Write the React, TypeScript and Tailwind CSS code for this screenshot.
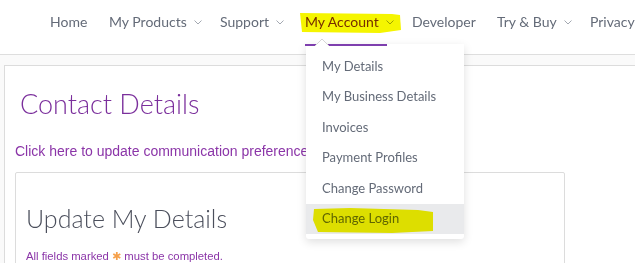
const Chevron = () => (
  <svg width="8" height="5" viewBox="0 0 8 5" className="ml-[7px] mt-[1px]">
    <path d="M0.5 0.5 L4 4 L7.5 0.5" fill="none" stroke="#a3a8b1" strokeWidth="1" />
  </svg>
);

const navItems = [
  { label: 'Home', w: 'w-[59px]', menu: false },
  { label: 'My Products', w: 'w-[111px]', menu: true },
  { label: 'Support', w: 'w-[85px]', menu: true },
  { label: 'My Account', w: 'w-[107px]', menu: true, active: true },
  { label: 'Developer', w: 'w-[85px]', menu: false },
  { label: 'Try & Buy', w: 'w-[93px]', menu: true },
  { label: 'Privacy', w: 'w-[60px]', menu: false },
];

const accountMenu = [
  'My Details',
  'My Business Details',
  'Invoices',
  'Payment Profiles',
  'Change Password',
  'Change Login',
];

export default function App() {
  return (
    <div className="relative w-[635px] h-[263px] overflow-hidden bg-white font-['Lato',sans-serif]">
      {/* top nav */}
      <header className="h-[55px] border-b border-[#dedede] pl-[50px] pt-[11px]">
        <nav className="flex items-center whitespace-nowrap text-[14px] text-[#646b78]">
          {navItems.map((item) => (
            <div
              key={item.label}
              className={`${item.w} shrink-0 flex items-center ${item.active ? 'text-[#7b2f9c]' : ''}`}
            >
              {item.label}
              {item.menu && <Chevron />}
            </div>
          ))}
        </nav>
      </header>

      {/* page body */}
      <div className="bg-[#fafafa] pt-[10px] pl-[4px] h-[208px]">
        <div className="bg-white border-l border-t border-[#dcdcdc] h-full pl-[10px] pr-[70px]">
          <h1 className="pl-[5px] pt-[22px] text-[27px] font-light leading-[32px] text-[#7b2f9c]">
            Contact Details
          </h1>
          <a className="block mt-[23px] font-['Liberation_Sans',sans-serif] text-[14px] leading-[16px] text-[#8b35a8] whitespace-nowrap">
            Click here to update communication preferences
          </a>
          <div className="mt-[13px] border border-[#dcdcdc] rounded-[2px] h-[120px] px-[10px] pt-[30px]">
            <h2 className="text-[25px] font-light leading-[30px] text-[#4b4f5c]">Update My Details</h2>
            <p className="mt-[16px] font-['Liberation_Sans',sans-serif] text-[11.3px] leading-[14px] text-[#8b35a8]">
              All fields marked{' '}
              <span className="font-['DejaVu_Sans',sans-serif] text-[#f5a04a] text-[11px]">✱</span> must be
              completed.
            </p>
          </div>
        </div>
      </div>

      {/* active nav underline + caret */}
      <div className="absolute left-[305px] top-[44px] w-[82px] h-[2px] bg-[#7e3fae] z-20" />
      <svg className="absolute left-[315px] top-[38px] z-30" width="14" height="8" viewBox="0 0 14 8">
        <path d="M0 8 L7 1 L14 8" fill="white" stroke="#d6d6d6" strokeWidth="1" />
      </svg>

      {/* account dropdown */}
      <div className="absolute left-[306px] top-[44px] w-[158px] bg-white rounded-b-[3px] pt-[7px] pb-[5px] shadow-[0_3px_10px_rgba(0,0,0,0.13)] z-10">
        {accountMenu.map((label, i) => (
          <div
            key={label}
            className={`h-[30.5px] flex items-center pl-[16px] text-[13px] text-[#646b78] ${
              i === accountMenu.length - 1 ? 'bg-[#e9eaec]' : ''
            }`}
          >
            {label}
          </div>
        ))}
      </div>

      {/* marker highlights */}
      <svg className="absolute left-0 top-0 z-40 pointer-events-none mix-blend-multiply" width="635" height="263">
        <path d="M300 13 L392 14 L400 15 L401 30 L380 33 L302 32 Z" fill="#f5f500" />
        <path d="M314 209 L350 208 L418 210 L433 212 L433 231 L392 233 L318 232 L313 220 Z" fill="#f2f200" />
      </svg>
    </div>
  );
}
